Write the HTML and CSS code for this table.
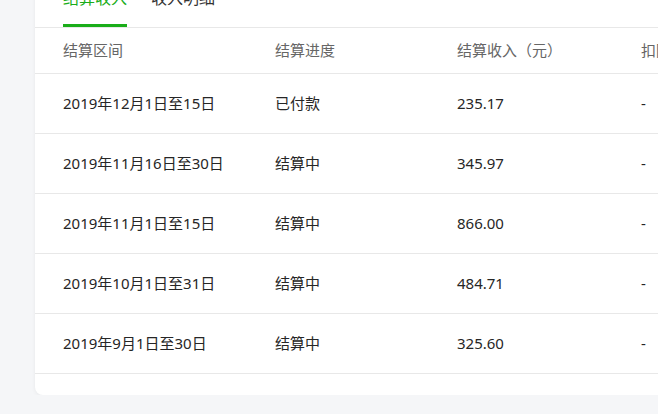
FILE: index.html
```html
<!DOCTYPE html>
<html lang="zh-CN">
<head>
  <meta charset="UTF-8">
  <meta name="viewport" content="width=device-width, initial-scale=1.0">
  <title>结算收入</title>
  <link rel="stylesheet" href="styles.css">
</head>
<body>
  <div class="page">
    <div class="card">
      <div class="tabs">
        <span class="tab active">结算收入</span>
        <span class="tab">收入明细</span>
      </div>

      <div class="table">
        <div class="row head">
          <div>结算区间</div>
          <div>结算进度</div>
          <div>结算收入（元）</div>
          <div>扣除金额</div>
        </div>
        <div class="row">
          <div>2019年12月1日至15日</div>
          <div>已付款</div>
          <div>235.17</div>
          <div>-</div>
        </div>
        <div class="row">
          <div>2019年11月16日至30日</div>
          <div>结算中</div>
          <div>345.97</div>
          <div>-</div>
        </div>
        <div class="row">
          <div>2019年11月1日至15日</div>
          <div>结算中</div>
          <div>866.00</div>
          <div>-</div>
        </div>
        <div class="row">
          <div>2019年10月1日至31日</div>
          <div>结算中</div>
          <div>484.71</div>
          <div>-</div>
        </div>
        <div class="row">
          <div>2019年9月1日至30日</div>
          <div>结算中</div>
          <div>325.60</div>
          <div>-</div>
        </div>
      </div>
    </div>
  </div>
</body>
</html>
```

FILE: styles.css
```css
body {
  margin: 0;
  background: #f5f6f8;
  font-family: "Noto Sans", "Noto Sans CJK SC", sans-serif;
  overflow: hidden;
}

.page {
  padding-left: 35px;
}

.card {
  width: 700px;
  margin-top: -30px;
  padding-top: 16px;
  padding-bottom: 21px;
  background: #fff;
  border-radius: 8px;
  box-shadow: 0 1px 4px rgba(0, 0, 0, 0.06);
}

.tabs {
  display: flex;
  gap: 24px;
  padding-left: 28px;
  border-bottom: 1px solid #e8e8e8;
}

.tab {
  font-size: 16px;
  line-height: 24px;
  padding-bottom: 14px;
  border-bottom: 3px solid transparent;
  color: #333;
}

.tab.active {
  color: #1aad19;
  border-bottom-color: #1aad19;
}

.row {
  box-sizing: border-box;
  display: grid;
  grid-template-columns: 212px 182px 184px 1fr;
  align-items: center;
  height: 60px;
  padding: 0 0 2px 28px;
  border-bottom: 1px solid #e8e8e8;
  font-size: 15px;
  line-height: 20px;
  color: #262626;
  white-space: nowrap;
}

.row.head {
  height: 46px;
  color: #666;
}
```
